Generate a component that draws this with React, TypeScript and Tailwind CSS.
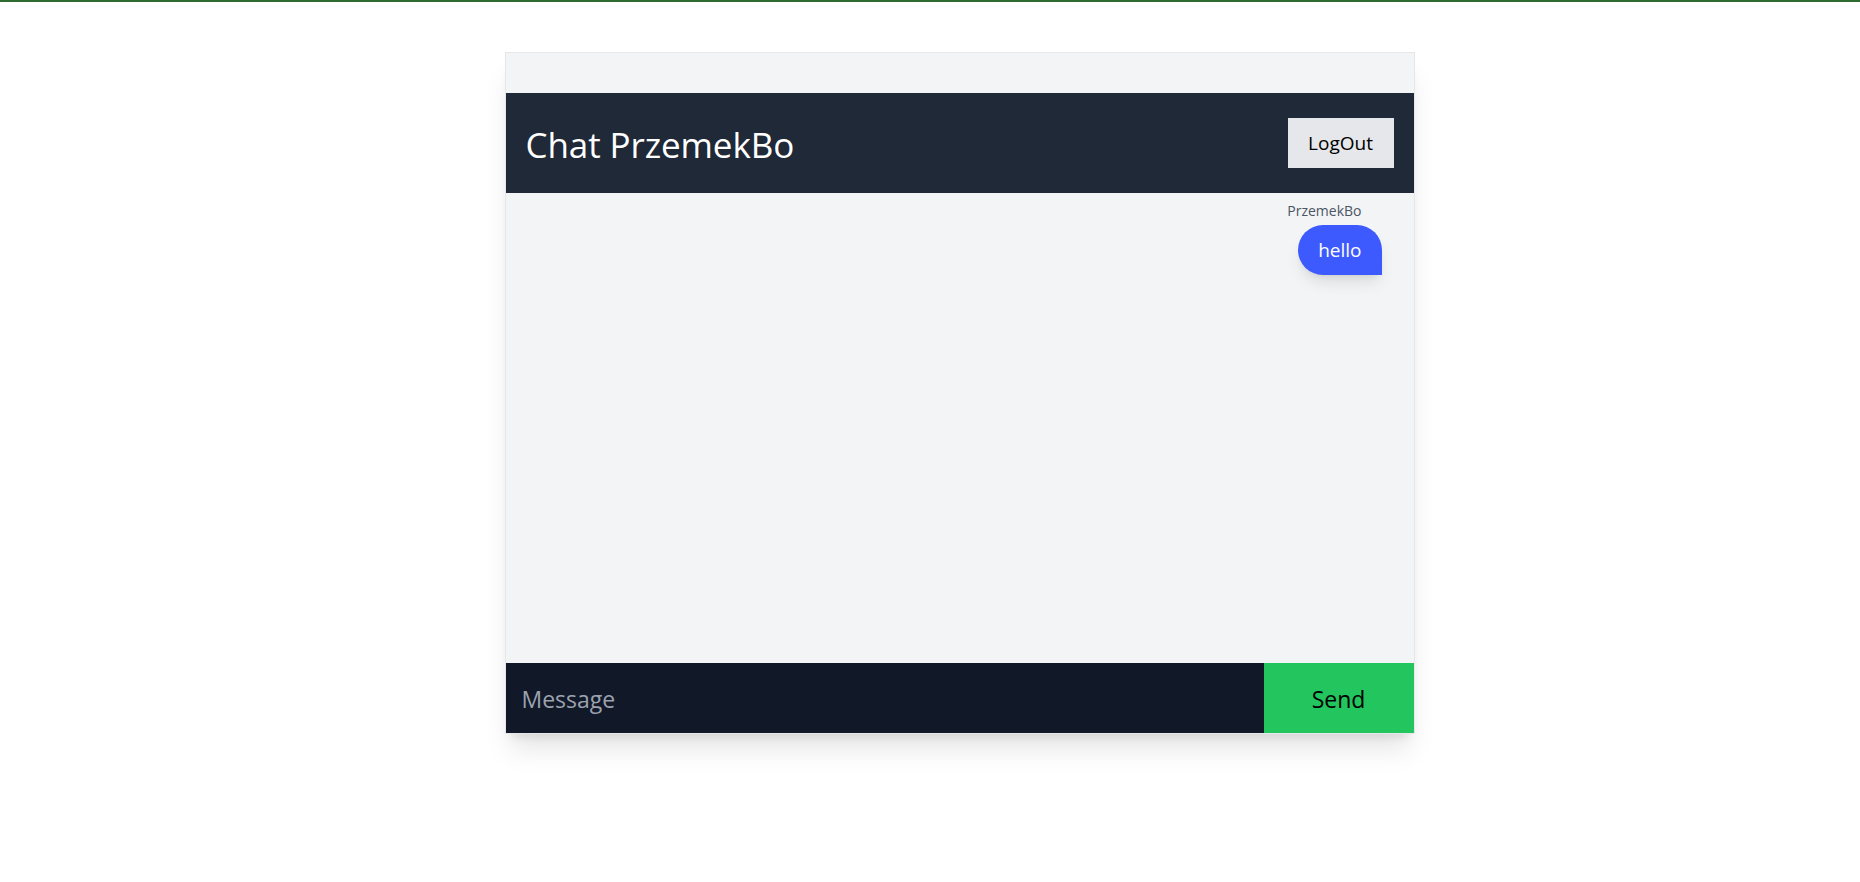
import { useState } from 'react';

const messages = [{ id: 1, author: 'PrzemekBo', text: 'hello' }];

export default function App() {
  const [text, setText] = useState('');

  return (
    <div className="min-h-screen bg-white font-['Open_Sans','Noto_Sans',sans-serif]">
      <div className="h-[2px] bg-[#2e6b31]" />
      <div className="flex justify-center pl-[59px] pt-[50px]">
        <div className="w-[910px] border border-[#e5e7eb] bg-[#f3f4f6] shadow-xl">
          <div className="h-10" />

          {/* header */}
          <div className="h-[100px] bg-[#1f2937] px-5 flex items-center justify-between">
            <h1 className="pt-1 text-[35px] text-white tracking-[-0.1px]">Chat PrzemekBo</h1>
            <button className="w-[106px] h-[50px] bg-[#e5e7eb] text-black text-[19px]">LogOut</button>
          </div>

          {/* messages */}
          <div className="h-[470px] pt-2 overflow-y-auto">
            {messages.map((m) => (
              <div key={m.id} className="flex flex-col items-end">
                <span className="mr-[52px] text-sm leading-5 text-[#4b5563]">{m.author}</span>
                <div className="mr-8 mt-[4px] h-[50px] px-5 flex items-center bg-[#3d5afe] text-white text-[19px] rounded-t-[25px] rounded-bl-[25px] shadow-lg">
                  {m.text}
                </div>
              </div>
            ))}
          </div>

          {/* input */}
          <div className="h-[70px] flex">
            <input
              autoFocus
              value={text}
              onChange={(e) => setText(e.target.value)}
              placeholder="Message"
              className="flex-1 bg-[#111827] px-4 pt-0.5 text-[23px] text-white placeholder-[#9ca3af] outline-none"
            />
            <button className="w-[150px] bg-[#22c55e] pt-0.5 text-black text-[23px]">Send</button>
          </div>
        </div>
      </div>
    </div>
  );
}
